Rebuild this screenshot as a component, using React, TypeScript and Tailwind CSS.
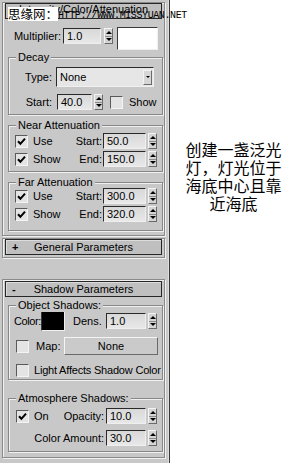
import React from "react";

const PANEL = "bg-[#c8c8c8]";

function Spinner({ cls = "" }: { cls?: string }) {
  return (
    <div className={`flex flex-col w-[9px] h-[16px] border border-t-[#f4f4f4] border-l-[#f4f4f4] border-b-[#6a6a6a] border-r-[#6a6a6a] bg-[#d4d4d4] ${cls}`}>
      <div className="flex-1 flex items-center justify-center border-b border-[#8a8a8a]">
        <div className="w-0 h-0 border-l-[3px] border-r-[3px] border-b-[3px] border-l-transparent border-r-transparent border-b-black" />
      </div>
      <div className="flex-1 flex items-center justify-center">
        <div className="w-0 h-0 border-l-[3px] border-r-[3px] border-t-[3px] border-l-transparent border-r-transparent border-t-black" />
      </div>
    </div>
  );
}

function Field({ value, cls = "" }: { value: string; cls?: string }) {
  return (
    <div
      className={`h-[16px] border border-t-[#2a2a2a] border-l-[#2a2a2a] border-b-[#efefef] border-r-[#efefef] bg-gradient-to-b from-[#d8d8d8] to-[#e8e8e8] text-[11px] leading-[14px] pl-[3px] ${cls}`}
    >
      {value}
    </div>
  );
}

function Check({ checked = false, cls = "" }: { checked?: boolean; cls?: string }) {
  return (
    <div
      className={`w-[13px] h-[13px] shrink-0 border border-t-[#5a5a5a] border-l-[#5a5a5a] border-b-[#f4f4f4] border-r-[#f4f4f4] bg-[#e4e4e4] flex items-center justify-center ${cls}`}
    >
      {checked && (
        <svg width="9" height="9" viewBox="0 0 9 9">
          <path d="M1 4.2 L3.4 6.8 L8 1.6" stroke="black" strokeWidth="2" fill="none" />
        </svg>
      )}
    </div>
  );
}

function Group({
  label,
  cls = "",
  children,
}: {
  label: string;
  cls?: string;
  children?: React.ReactNode;
}) {
  return (
    <div
      className={`relative ml-[5px] w-[155px] border border-[#878787] shadow-[inset_1px_1px_0_#f0f0f0,1px_1px_0_#f0f0f0] flex flex-col ${cls}`}
    >
      <span className={`absolute top-[-8px] left-[7px] px-[2px] ${PANEL} text-[11px] leading-[14px]`}>
        {label}
      </span>
      {children}
    </div>
  );
}

function Header({ sign, title, cls = "" }: { sign: string; title: string; cls?: string }) {
  return (
    <div
      className={`relative ml-[2px] w-[157px] h-[16px] border border-[#262626] bg-[#bfbfbf] shadow-[inset_1px_1px_0_#dcdcdc] flex items-center justify-center text-[11px] leading-[14px] ${cls}`}
    >
      <span className="absolute left-[6px] top-[0px] font-bold">{sign}</span>
      <span>{title}</span>
    </div>
  );
}

function Rollout({ cls = "", children }: { cls?: string; children?: React.ReactNode }) {
  return (
    <div
      className={`ml-[2px] w-[163px] border border-[#8a8a8a] shadow-[inset_1px_1px_0_#f0f0f0,1px_1px_0_#f0f0f0] flex flex-col ${cls}`}
    >
      {children}
    </div>
  );
}

function AttRow({
  checked,
  left,
  label,
  value,
  cls = "",
}: {
  checked: boolean;
  left: string;
  label: string;
  value: string;
  cls?: string;
}) {
  return (
    <div className={`flex items-center h-[16px] ${cls}`}>
      <div className="w-[62px] pl-[6px] flex items-center">
        <Check checked={checked} />
        <span className="ml-[5px] text-[11px]">{left}</span>
      </div>
      <span className="w-[31px] text-right text-[11px]">{label}</span>
      <Field value={value} cls="ml-[1px] w-[43px]" />
      <Spinner cls="ml-[2px]" />
    </div>
  );
}

export default function App() {
  return (
    <div className="relative flex w-[297px] h-[463px] overflow-hidden bg-white text-black font-['Liberation_Sans',Arial,sans-serif]">
      <div className={`w-[168px] h-full ${PANEL} flex flex-col shrink-0`}>
        {/* Rollout 1 */}
        <Rollout cls="mt-[2px] h-[234px]">
          <div className="relative ml-[2px] w-[157px] h-[16px] border border-[#262626] bg-[#bfbfbf] flex justify-center text-[11px] leading-[10px] overflow-hidden">
            Intensity/Color/Attenuation
          </div>
          {/* Multiplier */}
          <div className="mt-[8px] h-[23px] flex items-start">
            <span className="w-[58px] mt-[1px] h-[16px] leading-[16px] text-right text-[11px]">Multiplier:</span>
            <Field value="1.0" cls="ml-[2px] mt-[1px] w-[38px]" />
            <Spinner cls="ml-[3px] mt-[1px]" />
            <div className="ml-[4px] w-[41px] h-[23px] bg-white border border-t-[#3a3a3a] border-l-[#3a3a3a] border-b-[#f0f0f0] border-r-[#f0f0f0]" />
          </div>
          {/* Decay */}
          <Group label="Decay" cls="mt-[7px] h-[58px]">
            <div className="mt-[9px] h-[20px] flex items-center">
              <span className="w-[43px] text-right text-[11px]">Type:</span>
              <div className="ml-[4px] w-[98px] h-[20px] border border-t-[#2a2a2a] border-l-[#2a2a2a] border-b-[#f0f0f0] border-r-[#f0f0f0] bg-[#e6e6e6] flex items-center justify-between">
                <span className="pl-[3px] text-[11px]">None</span>
                <div className="mr-[1px] w-[9px] h-[15px] border border-t-[#f4f4f4] border-l-[#f4f4f4] border-b-[#6a6a6a] border-r-[#6a6a6a] bg-[#d6d6d6] flex items-center justify-center">
                  <div className="w-0 h-0 border-l-[2px] border-r-[2px] border-t-[2px] border-l-transparent border-r-transparent border-t-black" />
                </div>
              </div>
            </div>
            <div className="mt-[7px] h-[16px] flex items-center">
              <span className="w-[43px] text-right text-[11px]">Start:</span>
              <Field value="40.0" cls="ml-[5px] w-[35px]" />
              <Spinner cls="ml-[2px]" />
              <Check cls="ml-[7px]" />
              <span className="ml-[6px] text-[11px]">Show</span>
            </div>
          </Group>
          {/* Near */}
          <Group label="Near Attenuation" cls="mt-[10px] h-[47px]">
            <AttRow checked left="Use" label="Start:" value="50.0" cls="mt-[7px]" />
            <AttRow checked left="Show" label="End:" value="150.0" cls="mt-[2px]" />
          </Group>
          {/* Far */}
          <Group label="Far Attenuation" cls="mt-[10px] h-[49px]">
            <AttRow checked left="Use" label="Start:" value="300.0" cls="mt-[5px]" />
            <AttRow checked left="Show" label="End:" value="320.0" cls="mt-[2px]" />
          </Group>
        </Rollout>

        {/* General Parameters */}
        <Rollout cls="mt-[2px] h-[20px]">
          <Header sign="+" title="General Parameters" cls="mt-[0px]" />
        </Rollout>

        {/* Shadow Parameters */}
        <Rollout cls="mt-[21px] h-[179px]">
          <Header sign="-" title="Shadow Parameters" cls="mt-[1px]" />
          <Group label="Object Shadows:" cls="mt-[8px] h-[75px]">
            <div className="mt-[5px] h-[20px] flex items-center">
              <span className="w-[32px] pl-[5px] text-[11px] tracking-[-0.4px] whitespace-nowrap">Color:</span>
              <div className="w-[24px] h-[20px] bg-black border border-t-[#3a3a3a] border-l-[#3a3a3a] border-b-[#f0f0f0] border-r-[#f0f0f0]" />
              <span className="ml-[8px] w-[31px] text-[11px]">Dens.</span>
              <Field value="1.0" cls="ml-[2px] w-[40px]" />
              <Spinner cls="ml-[2px]" />
            </div>
            <div className="mt-[6px] h-[18px] flex items-center">
              <div className="w-[27px] pl-[7px]">
                <Check />
              </div>
              <span className="w-[28px] text-[11px]">Map:</span>
              <div className="w-[94px] h-[18px] border border-t-[#f4f4f4] border-l-[#f4f4f4] border-b-[#6a6a6a] border-r-[#6a6a6a] bg-[#cacaca] flex items-center justify-center text-[11px]">
                None
              </div>
            </div>
            <div className="mt-[8px] h-[14px] flex items-center">
              <Check cls="ml-[7px]" />
              <span className="ml-[5px] text-[11px] tracking-[-0.2px] whitespace-nowrap">Light Affects Shadow Color</span>
            </div>
          </Group>
          <Group label="Atmosphere Shadows:" cls="mt-[18px] h-[54px]">
            <div className="mt-[9px] h-[16px] flex items-center">
              <div className="w-[25px] pl-[7px]">
                <Check checked />
              </div>
              <span className="w-[29px] text-[11px]">On</span>
              <span className="w-[41px] text-right text-[11px]">Opacity:</span>
              <Field value="10.0" cls="ml-[2px] w-[40px]" />
              <Spinner cls="ml-[2px]" />
            </div>
            <div className="mt-[6px] h-[16px] flex items-center">
              <span className="w-[95px] text-right text-[11px]">Color Amount:</span>
              <Field value="30.0" cls="ml-[2px] w-[40px]" />
              <Spinner cls="ml-[2px]" />
            </div>
          </Group>
        </Rollout>
      </div>
      <div className="w-[1px] h-full bg-[#dedede] shrink-0" />
      <div className="w-[1px] h-full bg-[#3a3a3a] shrink-0" />
      <div className="flex-1 flex justify-center pt-[140px]">
        <p className="text-[16px] leading-[18px] text-center font-['Noto_Sans_CJK_SC',sans-serif]">
          创建一盏泛光
          <br />
          灯，灯光位于
          <br />
          海底中心且靠
          <br />
          近海底
        </p>
      </div>

      {/* Watermark overlay */}
      <div className="absolute left-[8px] top-[7px] flex items-center">
        <span className="bg-white text-[12.5px] leading-[14px] font-['Noto_Sans_CJK_SC',sans-serif]">思缘网：</span>
        <span className="text-[10px] leading-[10px] tracking-[-0.4px] uppercase font-['Liberation_Mono',monospace] mt-[3px]">
          http://www.missyuan.net
        </span>
      </div>
    </div>
  );
}
